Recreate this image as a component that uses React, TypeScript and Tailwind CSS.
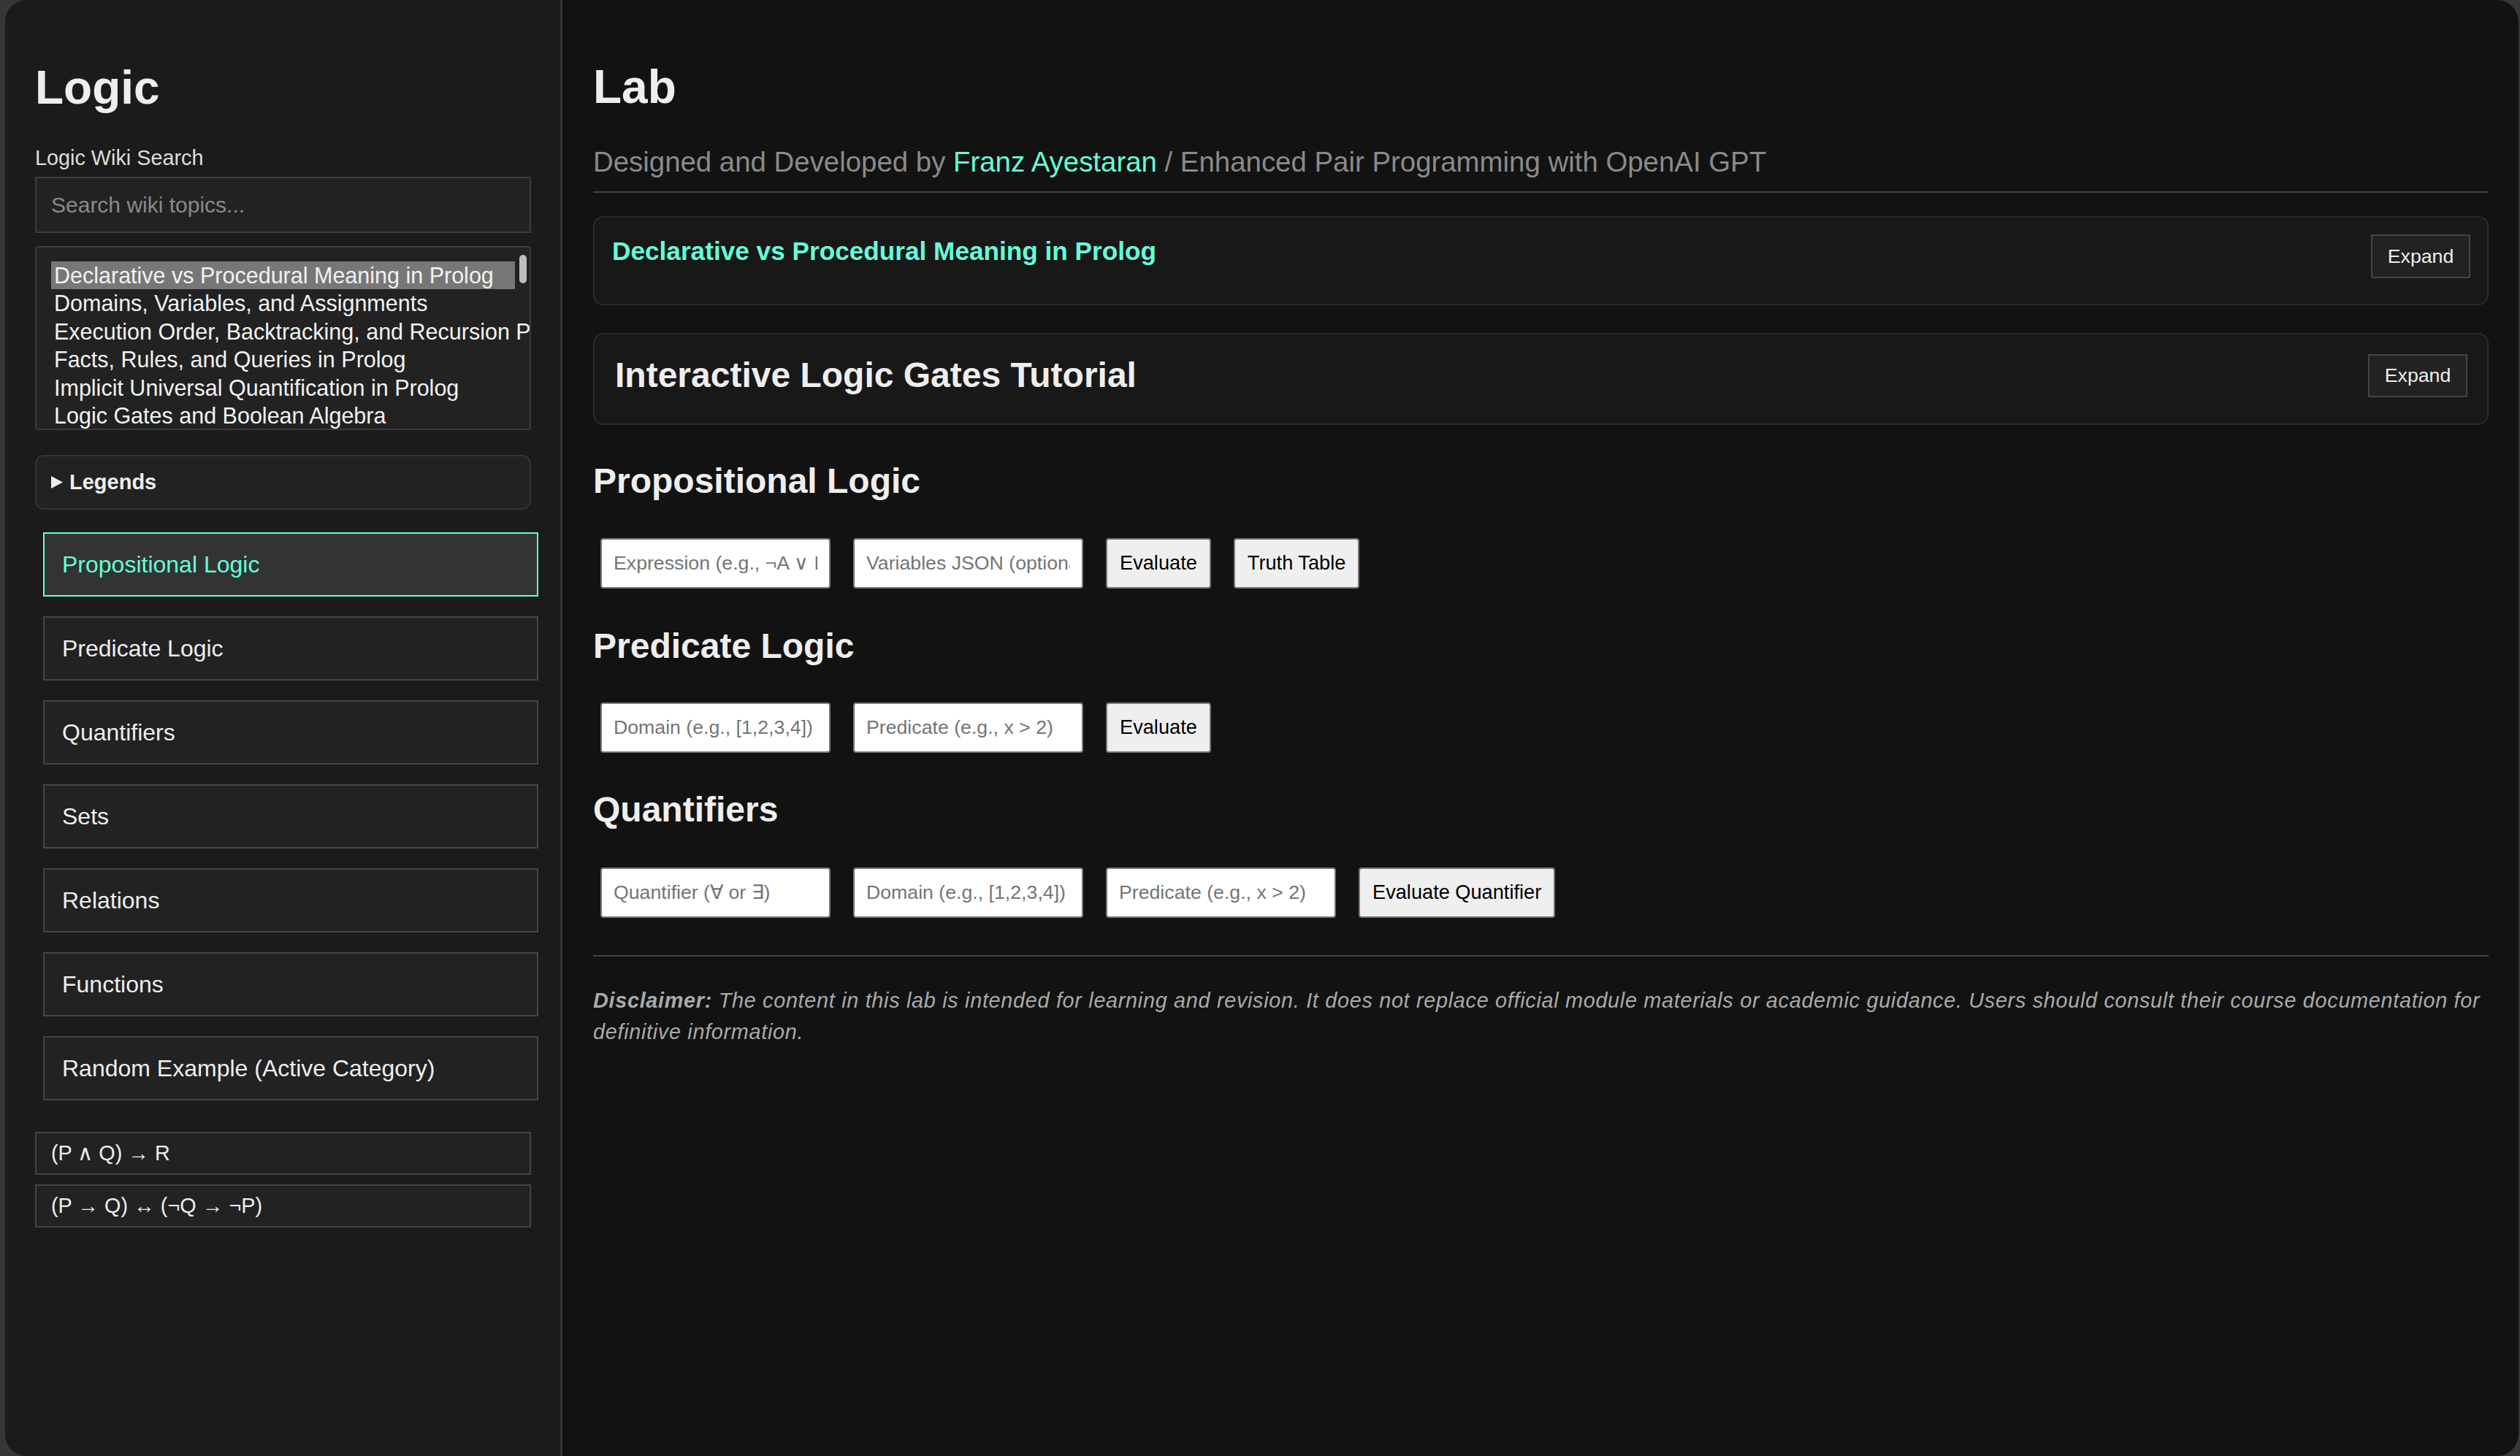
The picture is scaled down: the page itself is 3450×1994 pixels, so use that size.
import React from 'react';

const WIKI_TOPICS = [
  'Declarative vs Procedural Meaning in Prolog',
  'Domains, Variables, and Assignments',
  'Execution Order, Backtracking, and Recursion Pitfalls',
  'Facts, Rules, and Queries in Prolog',
  'Implicit Universal Quantification in Prolog',
  'Logic Gates and Boolean Algebra',
];

const CATEGORIES = [
  'Propositional Logic',
  'Predicate Logic',
  'Quantifiers',
  'Sets',
  'Relations',
  'Functions',
  'Random Example (Active Category)',
];

const FORMULAS = ['(P ∧ Q) → R', '(P → Q) ↔ (¬Q → ¬P)'];

function LabInput({ placeholder }: { placeholder: string }) {
  return (
    <input
      placeholder={placeholder}
      className="h-[69px] w-[315px] rounded-[4px] border-2 border-[#767676] bg-white px-[16px] text-[26.7px] text-black outline-none placeholder:text-[#757575]"
    />
  );
}

function LabButton({ children }: { children: React.ReactNode }) {
  return (
    <button className="h-[69px] shrink-0 rounded-[4px] border-2 border-[#767676] bg-[#efefef] px-[17px] text-[27.2px] text-black">
      {children}
    </button>
  );
}

function Sidebar() {
  return (
    <aside className="w-[763px] shrink-0 border-r-[3px] border-[#333333] bg-[#1b1b1b] pl-[41px] pr-[40px] pt-[83px]">
      <h1 className="text-[64px] font-bold leading-[74px] text-[#eeeeee]">Logic</h1>

      {/* Wiki search */}
      <label className="mt-[43px] block text-[28.8px] leading-[33px] text-[#dddddd]">Logic Wiki Search</label>
      <input
        placeholder="Search wiki topics..."
        className="mt-[9px] h-[77px] w-full border-2 border-[#3c3c3c] bg-[#222222] px-[20px] text-[30px] text-[#eeeeee] outline-none placeholder:text-[#8a8a8a]"
      />

      <div className="relative mt-[18px] h-[252px] overflow-hidden rounded-[4px] border-2 border-[#3a3a3a] bg-[#222222] px-[20px] pt-[19px]">
        {WIKI_TOPICS.map((topic, idx) => (
          <div
            key={topic}
            className={`h-[38.4px] whitespace-nowrap px-[4px] text-[30.5px] leading-[38.4px] text-[#f2f2f2] ${
              idx === 0 ? 'bg-[#777777]' : ''
            }`}
          >
            {topic}
          </div>
        ))}
        <div className="absolute left-[661px] top-[10px] h-[39px] w-[10px] rounded-full bg-[#bdbdbd]" />
      </div>

      {/* Legends */}
      <div className="mt-[34px] flex h-[75px] items-center gap-[9px] rounded-[12px] border-2 border-[#333333] bg-[#222222] pl-[20px]">
        <svg width="16" height="17" viewBox="0 0 16 17">
          <polygon points="0,0 16,8.5 0,17" fill="#eeeeee" />
        </svg>
        <span className="text-[29px] font-bold text-[#eeeeee]">Legends</span>
      </div>

      {/* Category buttons */}
      <div className="mt-[31px] flex flex-col gap-[27px]">
        {CATEGORIES.map((cat, idx) => (
          <button
            key={cat}
            className={`ml-[11px] flex h-[88px] w-[678px] items-center border-2 pl-[24px] text-left text-[32px] ${
              idx === 0
                ? 'border-[#64ffda] bg-[#333333] text-[#64ffda]'
                : 'border-[#444444] bg-[#222222] text-[#eeeeee]'
            }`}
          >
            {cat}
          </button>
        ))}
      </div>

      {/* Formula examples */}
      <div className="mt-[43px] flex flex-col gap-[13px]">
        {FORMULAS.map((f) => (
          <div
            key={f}
            className="flex h-[59px] items-center border-2 border-[#444444] bg-[#222222] pl-[20px] text-[28.8px] text-[#eeeeee]"
          >
            {f}
          </div>
        ))}
      </div>
    </aside>
  );
}

export default function App() {
  return (
    <div className="h-[1994px] w-[3450px] overflow-hidden bg-[#363636] pl-[7px] pr-[2px] font-['Liberation_Sans',Arial,sans-serif]">
      <div className="flex h-full overflow-hidden rounded-[30px] bg-[#121212]">
        <Sidebar />

        <main className="flex-1 pl-[42px] pr-[41px] pt-[82px]">
          <h1 className="text-[64px] font-bold leading-[74px] text-[#eeeeee]">Lab</h1>
          <p className="mt-[44px] text-[38.4px] leading-[44px] text-[#8a8a8a]">
            Designed and Developed by <span className="text-[#64ffda]">Franz Ayestaran</span> / Enhanced Pair
            Programming with OpenAI GPT
          </p>
          <div className="mt-[18px] h-[2px] bg-[#444444]" />

          {/* Collapsible cards */}
          <div className="mt-[32px] flex items-start justify-between rounded-[14px] border-2 border-[#2a2a2a] bg-[#181818] pb-[35px] pl-[24px] pr-[23px] pt-[23px]">
            <h3 className="mt-[3px] text-[35.2px] font-bold leading-[40px] text-[#64ffda]">
              Declarative vs Procedural Meaning in Prolog
            </h3>
            <button className="h-[60px] w-[136px] border-2 border-[#444444] bg-[#222222] text-[26.7px] text-[#eeeeee]">
              Expand
            </button>
          </div>

          <div className="mt-[38px] flex items-start justify-between rounded-[14px] border-2 border-[#2a2a2a] bg-[#181818] pb-[36px] pl-[28px] pr-[27px] pt-[27px]">
            <h2 className="mt-[1px] text-[48px] font-bold leading-[55px] text-[#eeeeee]">
              Interactive Logic Gates Tutorial
            </h2>
            <button className="h-[59px] w-[136px] border-2 border-[#444444] bg-[#222222] text-[26.7px] text-[#eeeeee]">
              Expand
            </button>
          </div>

          {/* Propositional */}
          <h2 className="mt-[49px] text-[48px] font-bold leading-[55px] text-[#eeeeee]">Propositional Logic</h2>
          <div className="mt-[51px] flex gap-[31px] pl-[10px]">
            <LabInput placeholder="Expression (e.g., ¬A ∨ B)" />
            <LabInput placeholder="Variables JSON (optional)" />
            <LabButton>Evaluate</LabButton>
            <LabButton>Truth Table</LabButton>
          </div>

          {/* Predicate */}
          <h2 className="mt-[51px] text-[48px] font-bold leading-[55px] text-[#eeeeee]">Predicate Logic</h2>
          <div className="mt-[50px] flex gap-[31px] pl-[10px]">
            <LabInput placeholder="Domain (e.g., [1,2,3,4])" />
            <LabInput placeholder="Predicate (e.g., x > 2)" />
            <LabButton>Evaluate</LabButton>
          </div>

          {/* Quantifiers */}
          <h2 className="mt-[50px] text-[48px] font-bold leading-[55px] text-[#eeeeee]">Quantifiers</h2>
          <div className="mt-[52px] flex gap-[31px] pl-[10px]">
            <LabInput placeholder="Quantifier (∀ or ∃)" />
            <LabInput placeholder="Domain (e.g., [1,2,3,4])" />
            <LabInput placeholder="Predicate (e.g., x > 2)" />
            <LabButton>Evaluate Quantifier</LabButton>
          </div>

          <div className="mt-[51px] h-[2px] bg-[#444444]" />
          <p className="mt-[39px] text-[28.8px] italic leading-[43.2px] tracking-[0.7px] text-[#aaaaaa]">
            <strong>Disclaimer:</strong> The content in this lab is intended for learning and revision. It does not
            replace official module materials or academic guidance. Users should consult their course documentation
            for definitive information.
          </p>
        </main>
      </div>
    </div>
  );
}
